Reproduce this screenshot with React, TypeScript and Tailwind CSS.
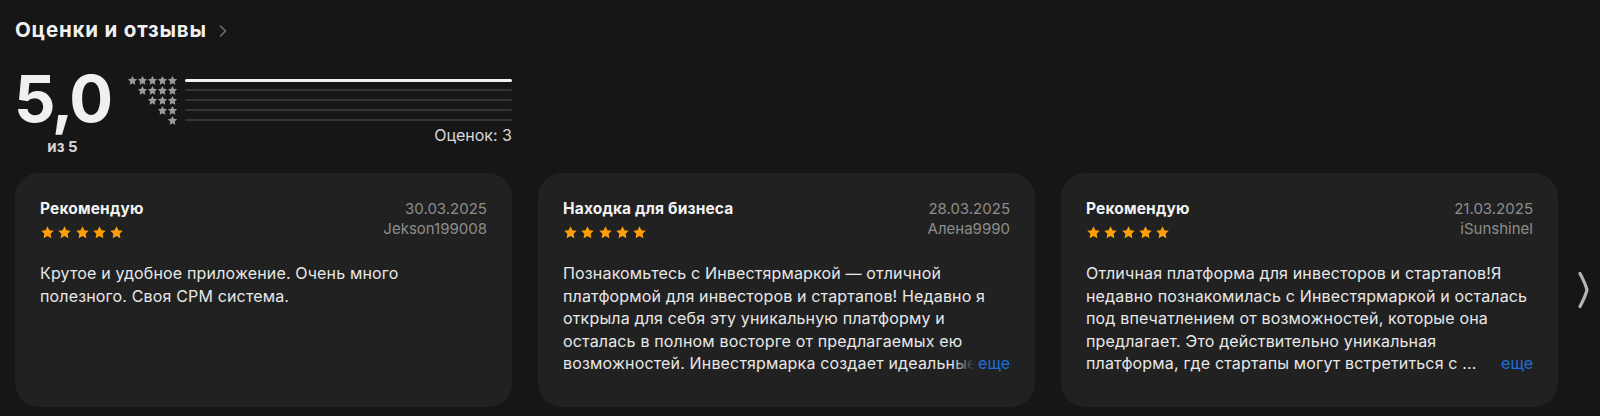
const STAR_PATH =
  'M12 2l3.09 6.26L22 9.27l-5 4.87 1.18 6.88L12 17.77l-6.18 3.25L7 14.14 2 9.27l6.91-1.01L12 2z'

type Review = {
  title: string
  date: string
  author: string
  body: string
  more: boolean
}

const REVIEWS: Review[] = [
  {
    title: 'Рекомендую',
    date: '30.03.2025',
    author: 'Jekson199008',
    body: 'Крутое и удобное приложение. Очень много полезного. Своя СРМ система.',
    more: false,
  },
  {
    title: 'Находка для бизнеса',
    date: '28.03.2025',
    author: 'Алена9990',
    body: 'Познакомьтесь с Инвестярмаркой — отличной платформой для инвесторов и стартапов! Недавно я открыла для себя эту уникальную платформу и осталась в полном восторге от предлагаемых ею возможностей. Инвестярмарка создает идеальные условия для поиска партнеров и привлечения инвестиций.',
    more: true,
  },
  {
    title: 'Рекомендую',
    date: '21.03.2025',
    author: 'iSunshinel',
    body: 'Отличная платформа для инвесторов и стартапов!Я недавно познакомилась с Инвестярмаркой и осталась под впечатлением от возможностей, которые она предлагает. Это действительно уникальная\nплатформа, где стартапы могут встретиться с ...',
    more: true,
  },
]

// share of ratings per star row, 5 → 1
const HISTOGRAM = [1, 0, 0, 0, 0]

function Star({ className }: { className: string }) {
  return (
    <svg viewBox="0 0 24 24" className={className} fill="currentColor">
      <path d={STAR_PATH} />
    </svg>
  )
}

function ReviewCard({ review }: { review: Review }) {
  return (
    <div className="flex h-[234px] w-[497px] shrink-0 flex-col rounded-[24px] bg-[#212121] px-[25px] pt-[26px]">
      <div className="flex items-start justify-between">
        <div>
          <p className="text-[15.5px] font-bold leading-[20px] tracking-[0.01em] text-[#f2f2f2]">
            {review.title}
          </p>
          <div className="mt-[6px] flex gap-[2.3px] text-[#ff9f0a]">
            {[0, 1, 2, 3, 4].map((i) => (
              <Star key={i} className="h-[15px] w-[15px]" />
            ))}
          </div>
        </div>
        <div className="text-right text-[15px] leading-[20px] text-[#8d8d8d]">
          <p>{review.date}</p>
          <p>{review.author}</p>
        </div>
      </div>

      <div className="relative mt-[22px]">
        <p className="max-h-[112.5px] overflow-hidden whitespace-pre-line text-[16px] leading-[22.5px] tracking-[0.01em] text-[#e8e8e8]">
          {review.body}
        </p>
        {review.more && (
          <span className="absolute bottom-0 right-0 bg-[linear-gradient(to_right,rgba(33,33,33,0),#212121_22px)] pl-[26px] text-[16px] leading-[22.5px] text-[#1a6fdb]">
            еще
          </span>
        )}
      </div>
    </div>
  )
}

export default function App() {
  return (
    <div className="min-h-[416px] overflow-hidden bg-[#161616] pt-[18px] font-['Inter',sans-serif]">
      <div className="flex items-center gap-[12px] px-[15px]">
        <h2 className="text-[20.5px] font-bold leading-[24px] tracking-[0.04em] text-[#f0f0f0]">
          Оценки и отзывы
        </h2>
        <svg viewBox="0 0 8 12" className="mt-[2px] h-[12px] w-[8px]" fill="none">
          <path d="M1.5 1l5 5-5 5" stroke="#6f6f6f" strokeWidth="1.6" strokeLinecap="round" strokeLinejoin="round" />
        </svg>
      </div>

      <div className="mt-[24px] flex px-[15px]">
        <div className="flex w-[95px] flex-col items-center">
          <p className="text-[65px] font-bold leading-[66px] tracking-[-0.035em] text-[#f0f0f0]">5,0</p>
          <p className="mt-[5px] text-[15px] font-bold leading-[20px] text-[#d6d6d6]">из 5</p>
        </div>

        <div className="ml-[17px] mt-[9px] w-[385px]">
          {HISTOGRAM.map((share, row) => (
            <div key={row} className="flex h-[10px] items-center">
              <div className="flex w-[50px] justify-end text-[#9a9a9a]">
                {Array.from({ length: 5 - row }).map((_, i) => (
                  <Star key={i} className="-mx-[0.5px] h-[11px] w-[11px]" />
                ))}
              </div>
              <div className="ml-[8px] h-[2px] flex-1 rounded-full bg-[#343434]">
                <div
                  className="h-[2.5px] rounded-full bg-[#f2f2f2]"
                  style={{ width: `${share * 100}%` }}
                />
              </div>
            </div>
          ))}
          <p className="text-right text-[16px] leading-[20px] text-[#d8d8d8]">Оценок: 3</p>
        </div>
      </div>

      <div className="mt-[16px] flex items-center gap-[26px] px-[15px]">
        {REVIEWS.map((review) => (
          <ReviewCard key={review.date} review={review} />
        ))}
        <svg viewBox="0 0 13 38" className="ml-[-7px] h-[38px] w-[13px] shrink-0" fill="none">
          <path d="M3 2.5C6 8 8.5 13.5 10 19 8.5 24.5 6 30 3 35.5" stroke="#b4b4b4" strokeWidth="3.2" strokeLinecap="round" />
        </svg>
      </div>
    </div>
  )
}
